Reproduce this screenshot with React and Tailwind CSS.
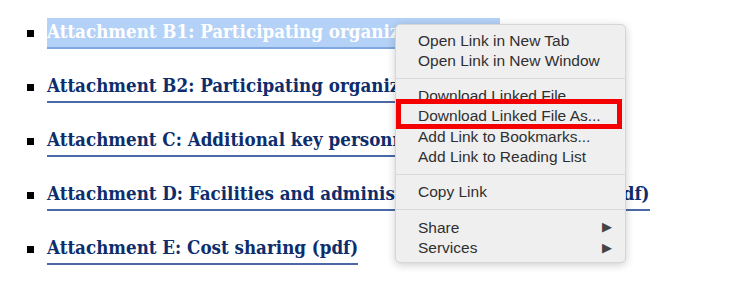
import React from 'react'

const links = [
  'Attachment B1: Participating organization (pdf)',
  'Attachment B2: Participating organization (pdf)',
  'Attachment C: Additional key personnel (pdf)',
  'Attachment D: Facilities and administrative costs approval (pdf)',
  'Attachment E: Cost sharing (pdf)',
]

function Sep() {
  return <div className="h-[15px] flex items-center"><div className="w-full h-px bg-[#d9d9d9]" /></div>
}

function Item({ children, arrow }) {
  return (
    <div className="h-[20.3px] flex items-center pl-[22px] pr-[13px]">
      <span className="flex-1">{children}</span>
      {arrow && <span className="text-[13px] text-[#444]">▶</span>}
    </div>
  )
}

export default function App() {
  return (
    <div className="relative w-[735px] h-[292px] bg-white overflow-hidden">
      <ul className="pt-[17px] pl-[27px] flex flex-col gap-[22px]" style={{ fontFamily: '"DejaVu Serif Condensed", "DejaVu Serif", serif' }}>
        {links.map((t, i) => (
          <li key={i} className="flex items-center h-[32px]">
            <span className="w-[7px] h-[7px] bg-black mr-[13px]" />
            <span
              className={
                i === 0
                  ? 'h-[31px] flex items-center font-bold text-[18.6px] text-white bg-[#b4d1f7] border-b-2 border-[#7ea8de] whitespace-nowrap'
                  : 'h-[31px] flex items-center font-bold text-[18.6px] text-[#0d2d6c] border-b-2 border-[#4a69a6] whitespace-nowrap'
              }
            >
              {t}
            </span>
          </li>
        ))}
      </ul>

      <div
        className="absolute left-[395px] top-[24px] w-[231px] rounded-[5px] bg-[#efefef] border border-[#d6d6d6] shadow-[0_2px_8px_rgba(0,0,0,0.2)] pt-[5px] pb-[4px] text-[15.5px] text-[#2f2f2f]"
        style={{ fontFamily: '"Liberation Sans", Arial, sans-serif' }}
      >
        <Item>Open Link in New Tab</Item>
        <Item>Open Link in New Window</Item>
        <Sep />
        <Item>Download Linked File</Item>
        <Item>Download Linked File As...</Item>
        <Item>Add Link to Bookmarks...</Item>
        <Item>Add Link to Reading List</Item>
        <Sep />
        <Item>Copy Link</Item>
        <Sep />
        <Item arrow>Share</Item>
        <Item arrow>Services</Item>
      </div>

      <div className="absolute left-[396px] top-[99px] w-[226px] h-[30px] border-[5px] border-[#f40000]" />
    </div>
  )
}
